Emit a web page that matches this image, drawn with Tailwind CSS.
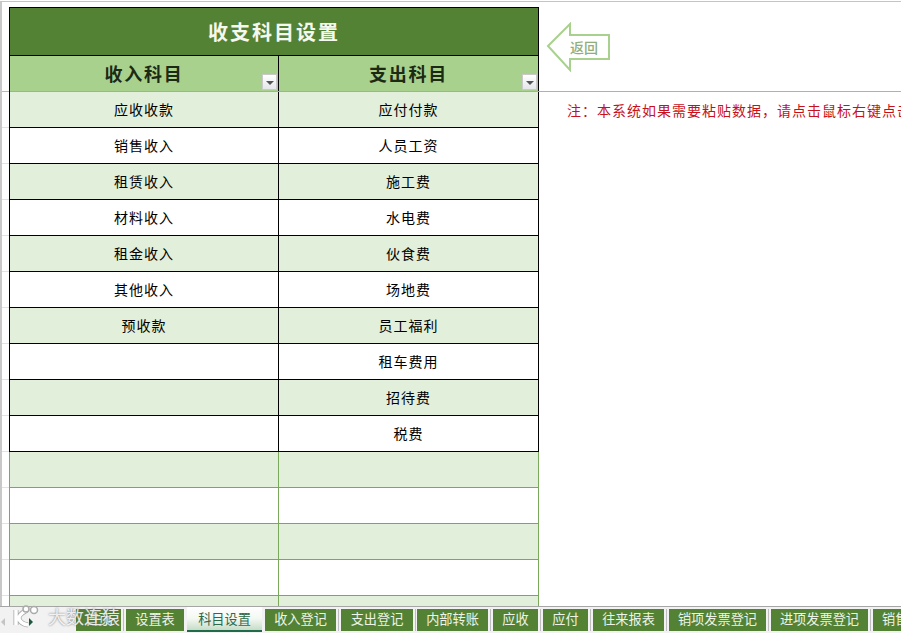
<!DOCTYPE html>
<html lang="zh">
<head>
<meta charset="utf-8">
<script src="https://cdn.jsdelivr.net/npm/@tailwindcss/browser@4"></script>
</head>
<body class="m-0 bg-white">
<div class="relative flex h-[633px] w-[901px] flex-col overflow-hidden bg-white text-black" style="font-family:'Noto Sans CJK SC','Liberation Sans',sans-serif">
  <!-- sheet -->
  <div class="mt-[1px] flex h-[605px] overflow-hidden border-t border-[#c4c4c4]">
    <!-- gutter -->
    <div class="flex h-full w-[9px] shrink-0 flex-col border-l-2 border-[#c8c8c8]">
      <div class="h-[90px] shrink-0 border-b border-[#b8b8b8]"></div>
      <div class="h-[36px] shrink-0 border-b border-[#e2e2e2]"></div>
      <div class="h-[36px] shrink-0 border-b border-[#e2e2e2]"></div>
      <div class="h-[36px] shrink-0 border-b border-[#e2e2e2]"></div>
      <div class="h-[36px] shrink-0 border-b border-[#e2e2e2]"></div>
      <div class="h-[36px] shrink-0 border-b border-[#e2e2e2]"></div>
      <div class="h-[36px] shrink-0 border-b border-[#e2e2e2]"></div>
      <div class="h-[36px] shrink-0 border-b border-[#e2e2e2]"></div>
      <div class="h-[36px] shrink-0 border-b border-[#e2e2e2]"></div>
      <div class="h-[36px] shrink-0 border-b border-[#e2e2e2]"></div>
      <div class="h-[36px] shrink-0 border-b border-[#e2e2e2]"></div>
      <div class="h-[36px] shrink-0 border-b border-[#e2e2e2]"></div>
      <div class="h-[36px] shrink-0 border-b border-[#e2e2e2]"></div>
      <div class="h-[36px] shrink-0 border-b border-[#e2e2e2]"></div>
      <div class="h-[36px] shrink-0 border-b border-[#e2e2e2]"></div>
    </div>
    <!-- table -->
    <div class="mt-[5px] flex h-fit w-[530px] shrink-0 flex-col border-t border-l border-black">
      <div class="flex h-[48px] items-center justify-center border-r border-b border-black bg-[#548235] text-[20px] font-bold tracking-[2px] text-[#f4f8ef]">收支科目设置</div>
      <div class="grid h-[36px] grid-cols-[269px_260px] border-b border-[#a9a9a9] bg-[#a9d18e] text-[18px] font-bold tracking-[1.7px] text-[#1c2a14]">
        <div class="relative flex items-center justify-center border-r border-black">收入科目
          <span class="absolute right-[1px] bottom-[1px] flex h-[16px] w-[15px] items-center justify-center border border-[#c9c9c9] bg-gradient-to-b from-white to-[#e4e6ea]"><span class="mt-[1px] border-x-[4px] border-t-[4px] border-x-transparent border-t-[#555]"></span></span>
        </div>
        <div class="relative flex items-center justify-center border-r border-black">支出科目
          <span class="absolute right-[1px] bottom-[1px] flex h-[16px] w-[15px] items-center justify-center border border-[#c9c9c9] bg-gradient-to-b from-white to-[#e4e6ea]"><span class="mt-[1px] border-x-[4px] border-t-[4px] border-x-transparent border-t-[#555]"></span></span>
        </div>
      </div>
      <div class="grid grid-cols-[269px_260px] text-[14px] tracking-[1px] [&>div]:flex [&>div]:h-[36px] [&>div]:items-center [&>div]:justify-center [&>div]:border-r [&>div]:border-b [&>div]:border-black">
        <div class="bg-[#e2efda]">应收收款</div><div class="bg-[#e2efda]">应付付款</div>
        <div>销售收入</div><div>人员工资</div>
        <div class="bg-[#e2efda]">租赁收入</div><div class="bg-[#e2efda]">施工费</div>
        <div>材料收入</div><div>水电费</div>
        <div class="bg-[#e2efda]">租金收入</div><div class="bg-[#e2efda]">伙食费</div>
        <div>其他收入</div><div>场地费</div>
        <div class="bg-[#e2efda]">预收款</div><div class="bg-[#e2efda]">员工福利</div>
        <div></div><div>租车费用</div>
        <div class="bg-[#e2efda]"></div><div class="bg-[#e2efda]">招待费</div>
        <div></div><div>税费</div>
      </div>
      <div class="-ml-[1px] grid grid-cols-[269px_260px] border-l border-[#7aa95c] [&>div]:h-[36px] [&>div]:border-r [&>div]:border-b [&>div]:border-[#7aa95c]">
        <div class="bg-[#e2efda]"></div><div class="bg-[#e2efda]"></div>
        <div></div><div></div>
        <div class="bg-[#e2efda]"></div><div class="bg-[#e2efda]"></div>
        <div></div><div></div>
        <div class="bg-[#e2efda]"></div><div class="bg-[#e2efda]"></div>
      </div>
    </div>
    <!-- right side -->
    <div class="relative min-w-0 flex-1">
      <div class="h-[90px] border-b border-[#b0b0b0]"></div>
      <div class="mt-[8px] whitespace-nowrap pl-[28px] text-[14px] leading-[20px] tracking-[1px] text-[#c8101c]">注：本系统如果需要粘贴数据，请点击鼠标右键点击</div>
      <div class="absolute left-[7px] top-[20px] h-[50px] w-[66px]">
        <svg class="block" width="66" height="50" viewBox="0 0 66 50" fill="none"><path d="M2 24 L24 2 V13 H63 V37 H24 V48 Z" fill="#fff" stroke="#a9d18e" stroke-width="2"/></svg>
        <span class="absolute left-[24px] top-[15px] text-[14px] leading-[20px] font-medium text-[#8fae7b]">返回</span>
      </div>
    </div>
  </div>
  <!-- tabs -->
  <div class="flex h-[27px] items-start gap-[2px] border-t border-[#a6a6a6] bg-[#f2f2f2] text-[13.2px] leading-[19px] text-[#eef4e8]">
    <div class="flex h-[22px] w-[74px] shrink-0 items-center pt-[4px] mt-[2px]">
      <span class="ml-[1px] border-y-[4px] border-r-[4px] border-y-transparent border-r-[#c4c4c4]"></span>
      <span class="ml-[24px] border-y-[4px] border-l-[4px] border-y-transparent border-l-[#1f5a3a]"></span>
    </div>
    <div class="mt-[2px] h-[22px] w-[45px] shrink-0 bg-[#548235] text-center">首页</div>
    <i class="mt-[2px] h-[22px] w-px shrink-0 bg-[#bdbdbd]"></i>
    <div class="mt-[2px] h-[22px] w-[58px] shrink-0 bg-[#548235] text-center">设置表</div>
    <div class="ml-[1px] mr-[1px] h-[25px] w-[75px] shrink-0 border-b-2 border-[#1f6b4a] bg-gradient-to-b from-white via-[#f4f8f2] to-[#c6dcc8] pt-[2px] text-center text-[#2c6a4a]">科目设置</div>
    <div class="mt-[2px] h-[22px] w-[71px] shrink-0 bg-[#548235] text-center">收入登记</div>
    <i class="mt-[2px] h-[22px] w-px shrink-0 bg-[#bdbdbd]"></i>
    <div class="mt-[2px] h-[22px] w-[72px] shrink-0 bg-[#548235] text-center">支出登记</div>
    <i class="mt-[2px] h-[22px] w-px shrink-0 bg-[#bdbdbd]"></i>
    <div class="-ml-[1px] mt-[2px] h-[22px] w-[71px] shrink-0 bg-[#548235] text-center">内部转账</div>
    <i class="mt-[2px] h-[22px] w-px shrink-0 bg-[#bdbdbd]"></i>
    <div class="mt-[2px] h-[22px] w-[45px] shrink-0 bg-[#548235] text-center">应收</div>
    <i class="mt-[2px] h-[22px] w-px shrink-0 bg-[#bdbdbd]"></i>
    <div class="mt-[2px] h-[22px] w-[45px] shrink-0 bg-[#548235] text-center">应付</div>
    <i class="mt-[2px] h-[22px] w-px shrink-0 bg-[#bdbdbd]"></i>
    <div class="mt-[2px] h-[22px] w-[71px] shrink-0 bg-[#548235] text-center">往来报表</div>
    <i class="mt-[2px] h-[22px] w-px shrink-0 bg-[#bdbdbd]"></i>
    <div class="mt-[2px] h-[22px] w-[97px] shrink-0 bg-[#548235] text-center">销项发票登记</div>
    <i class="mt-[2px] h-[22px] w-px shrink-0 bg-[#bdbdbd]"></i>
    <div class="mt-[2px] h-[22px] w-[97px] shrink-0 bg-[#548235] text-center">进项发票登记</div>
    <i class="mt-[2px] h-[22px] w-px shrink-0 bg-[#bdbdbd]"></i>
    <div class="mt-[2px] h-[22px] w-[60px] shrink-0 whitespace-nowrap bg-[#548235] pl-[9px]">销售报表</div>
  </div>
  <!-- watermark -->
  <div class="absolute left-[9px] top-[604px] flex items-center gap-[7px] text-[18px] leading-[24px] text-white/85 [text-shadow:0_0_2px_rgba(90,90,90,0.9)]">
    <svg width="32" height="24" viewBox="0 0 32 24" fill="none">
      <path d="M7 6 V21 M18 6 Q9 11 10 15 Q12 20 19 21" stroke="#a8a8a8" stroke-width="5"/>
      <path d="M7 6 V21 M18 6 Q9 11 10 15 Q12 20 19 21" stroke="#fff" stroke-width="3.5"/>
      <circle cx="17" cy="5" r="3" stroke="#aaa" stroke-width="1.5" fill="#fff"/>
      <circle cx="25" cy="6" r="3.5" stroke="#aaa" stroke-width="1.5" fill="#fff"/>
    </svg>
    <span>大数连猿</span>
  </div>
</div>
</body>
</html>
